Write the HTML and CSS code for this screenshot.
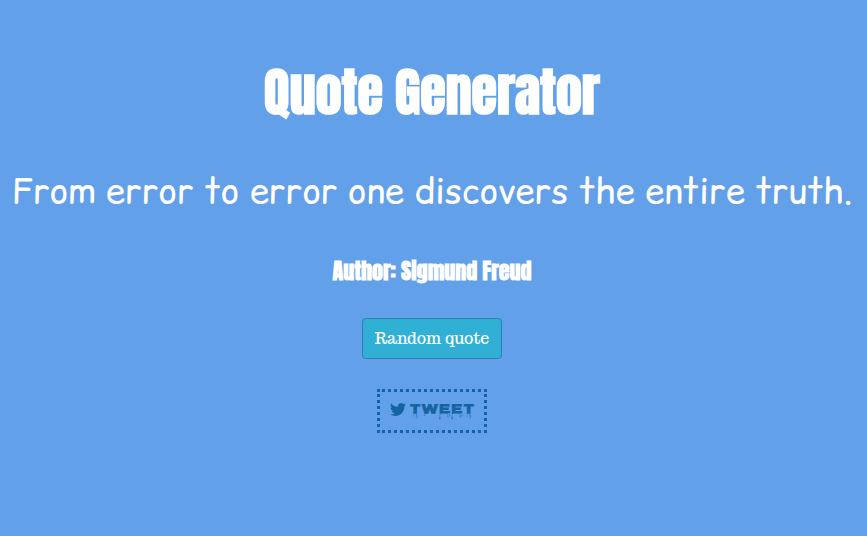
FILE: index.html
```html
<!DOCTYPE html>
<html lang="en">
<head>
<meta charset="utf-8">
<title>Quote Generator</title>
<link rel="stylesheet" href="styles.css">
</head>
<body>
<main class="page">
<h1 class="title">Quote Generator</h1>
<p class="quote">From error to error one discovers the entire truth.</p>
<h2 class="author">Author: Sigmund Freud</h2>
<button class="random" type="button">Random quote</button>
<a class="tweet" href="#"><svg class="bird" viewBox="0 0 24 24" aria-hidden="true"><path d="M23.95 4.57a10 10 0 0 1-2.82.77 4.96 4.96 0 0 0 2.16-2.72c-.95.55-2 .96-3.13 1.18a4.92 4.92 0 0 0-8.38 4.48C7.69 8.1 4.07 6.13 1.64 3.16a4.93 4.93 0 0 0 1.52 6.57 4.9 4.9 0 0 1-2.23-.61v.06a4.92 4.92 0 0 0 3.95 4.83 5 5 0 0 1-2.21.08 4.94 4.94 0 0 0 4.6 3.42A9.87 9.87 0 0 1 0 19.54a13.99 13.99 0 0 0 7.56 2.21c9.05 0 14-7.5 14-13.98v-.64a9.94 9.94 0 0 0 2.39-2.56z"/></svg><span>TWEET</span></a>
</main>
</body>
</html>
```
FILE: styles.css
```css
body {
  margin: 0;
  min-height: 100vh;
  background: #62a0ea;
  color: #fff;
}
.page {
  display: flex;
  flex-direction: column;
  align-items: center;
  padding: 56px 3px 0 0;
}
.title {
  margin: 0;
  font: 700 52px/72px Anton, Impact, sans-serif;
}
.quote {
  margin: 36px 0 0;
  font: 400 35px/54px "Comic Sans MS", "Comic Relief", "Comic Neue", sans-serif;
  white-space: nowrap;
}
.author {
  margin: 37px 0 0;
  font: 700 22px/32px Anton, Impact, sans-serif;
}
.random {
  box-sizing: border-box;
  height: 41px;
  margin: 31px 0 0;
  padding: 0 12px;
  border: 1px solid #337ab7;
  border-radius: 4px;
  background: #31b0d5;
  color: #fff;
  font: 16px/24px Trocchi, "Noto Serif", serif;
}
.tweet {
  display: flex;
  align-items: flex-start;
  gap: 4px;
  box-sizing: border-box;
  height: 44px;
  margin-top: 30px;
  padding: 9px 10px;
  border: 3px dotted #1464a0;
  color: #1464a0;
  font: 400 14px/20px Nosifer, "DejaVu Sans", sans-serif;
  text-decoration: none;
}
.bird {
  width: 16px;
  height: 17px;
  fill: currentColor;
}
```
